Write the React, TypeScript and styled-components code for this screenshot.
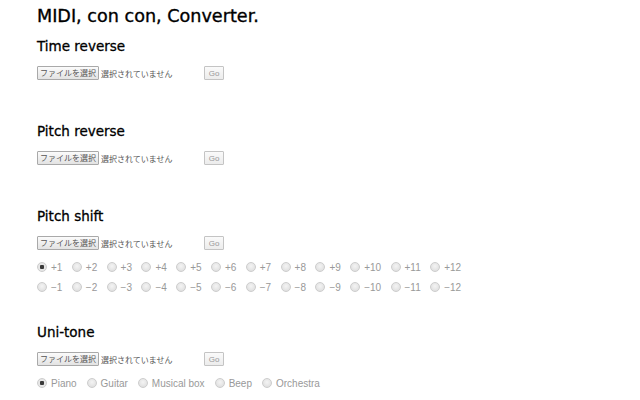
import React from "react";
import styled, { createGlobalStyle } from "styled-components";

const GlobalStyle = createGlobalStyle`
  html, body {
    margin: 0;
    padding: 0;
    background: #ffffff;
  }
  body {
    font-family: "DejaVu Sans", "Noto Sans CJK JP", sans-serif;
    color: #000;
  }
`;

const Page = styled.div`
  padding: 4px 0 0 37px;
`;

const Title = styled.h1`
  margin: 0 0 8px;
  font-size: 17.6px;
  line-height: 24px;
  font-weight: normal;
  color: #000;
  -webkit-text-stroke: 0.35px #000;
`;

const Section = styled.section<{ $hasOptions: boolean }>`
  padding-bottom: ${props => (props.$hasOptions ? 25 : 41)}px;
  &:last-child {
    padding-bottom: 0;
  }
`;

const Heading = styled.h2`
  margin: 0;
  font-size: 13.5px;
  line-height: 20px;
  font-weight: normal;
  color: #000;
  -webkit-text-stroke: 0.3px #000;
`;

const FileRow = styled.div`
  display: flex;
  align-items: center;
  height: 14px;
  margin-top: 10px;
`;

const FileInput = styled.div`
  display: flex;
  align-items: center;
  width: 163px;
  gap: 2px;
`;

const PickButton = styled.button`
  height: 14px;
  width: 62px;
  padding: 0;
  border: 1px solid #a9a9a9;
  border-radius: 1px;
  background: linear-gradient(#fbfbfb, #e3e3e3);
  font-family: "Noto Sans CJK JP", sans-serif;
  font-size: 8px;
  line-height: 12px;
  color: #555;
`;

const Status = styled.span`
  font-family: "Noto Sans CJK JP", sans-serif;
  font-size: 8px;
  color: #555;
  white-space: nowrap;
`;

const GoButton = styled.button`
  height: 14px;
  width: 20px;
  margin-left: 4px;
  padding: 0;
  border: 1px solid #c4c4c4;
  border-radius: 1px;
  background: linear-gradient(#fafafa, #ececec);
  font-family: "Liberation Sans", sans-serif;
  font-size: 8px;
  color: #999;
`;

const Options = styled.div`
  margin-top: 7px;
`;

const RadioLine = styled.div<{ $gap: number }>`
  display: flex;
  align-items: center;
  height: 20px;
  gap: ${props => props.$gap}px;
`;

const Choice = styled.label`
  display: flex;
  align-items: center;
  gap: 4px;
  font-family: "Liberation Sans", sans-serif;
  font-size: 10px;
  color: #999;
  white-space: nowrap;
`;

const Dot = styled.input`
  appearance: none;
  margin: 0;
  width: 10px;
  height: 10px;
  border-radius: 50%;
  border: 1px solid #cdcdcd;
  background: radial-gradient(circle at 50% 40%, #f4f4f4, #dadada);
  &:checked {
    background: radial-gradient(circle, #3a3a3a 0 2px, #e6e6e6 2.5px);
  }
`;

type SectionData = {
  title: string;
  name: string;
  lines: string[][];
  gap: number;
};

const plus = Array.from({ length: 12 }, (_, i) => `+${i + 1}`);
const minus = Array.from({ length: 12 }, (_, i) => `\u2212${i + 1}`);

const sections: SectionData[] = [
  { title: "Time reverse", name: "time", lines: [], gap: 9 },
  { title: "Pitch reverse", name: "pitch", lines: [], gap: 9 },
  { title: "Pitch shift", name: "shift", lines: [plus, minus], gap: 9.4 },
  {
    title: "Uni-tone",
    name: "tone",
    lines: [["Piano", "Guitar", "Musical box", "Beep", "Orchestra"]],
    gap: 10,
  },
];

const ConverterSection = ({ data }: { data: SectionData }) => (
  <Section $hasOptions={data.lines.length > 0}>
    <Heading>{data.title}</Heading>
    <FileRow>
      <FileInput>
        <PickButton>ファイルを選択</PickButton>
        <Status>選択されていません</Status>
      </FileInput>
      <GoButton>Go</GoButton>
    </FileRow>
    {data.lines.length > 0 && (
      <Options>
        {data.lines.map((line, li) => (
          <RadioLine key={li} $gap={data.gap}>
            {line.map((label, i) => (
              <Choice key={label}>
                <Dot
                  type="radio"
                  name={data.name}
                  defaultChecked={li === 0 && i === 0}
                />
                {label}
              </Choice>
            ))}
          </RadioLine>
        ))}
      </Options>
    )}
  </Section>
);

export default function App() {
  return (
    <>
      <GlobalStyle />
      <Page>
        <Title>MIDI, con con, Converter.</Title>
        {sections.map(s => (
          <ConverterSection key={s.name} data={s} />
        ))}
      </Page>
    </>
  );
}
